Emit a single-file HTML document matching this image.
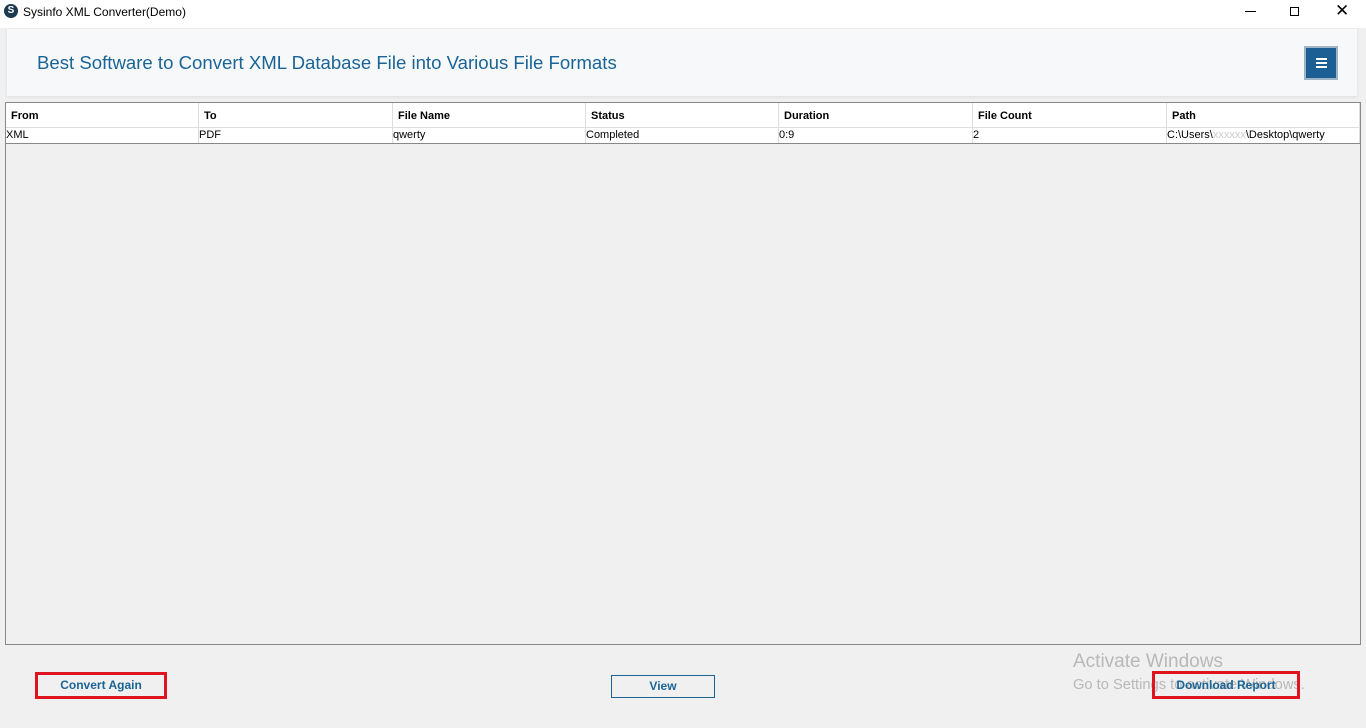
<!DOCTYPE html>
<html><head><style>
*{margin:0;padding:0;box-sizing:border-box}
body{width:1366px;height:728px;background:#f0f0f0;font-family:"Liberation Sans",sans-serif;position:relative;overflow:hidden}
.tb{position:absolute;left:0;top:0;width:1366px;height:28px;background:#fff}
.tb .t{position:absolute;left:23px;top:5px;font-size:12px;color:#000}
.ic{position:absolute;left:4px;top:4px;width:14px;height:14px;border-radius:50%;background:#1d3a4f;color:#fff;font-size:10px;font-weight:bold;text-align:center;line-height:14px}
.hdr{position:absolute;left:7px;top:29px;width:1350px;height:67px;background:#f7f8f9;box-shadow:0 1px 3px #ddd}
.hdr .h{position:absolute;left:30px;top:23px;font-size:18.6px;color:#1a6496}
.mb{position:absolute;left:1297px;top:17px;width:34px;height:34px;background:#1c5f94;border:2px solid #9db4c6}
.mb i{position:absolute;left:10px;width:11px;height:2px;background:#fff}
.tbl{position:absolute;left:5px;top:102px;width:1356px;height:543px;border:1px solid #888;background:#f0f0f0}
.row{position:absolute;left:0;width:1354px;background:#fff;display:flex}
.row div{border-right:1px solid #ddd;height:100%;font-size:11px;padding-left:2px}
.bt{position:absolute;font-size:12px;font-weight:bold;color:#1a6496;text-align:center}
</style></head><body>
<div class="tb"><div class="ic">S</div><div class="t">Sysinfo XML Converter(Demo)</div>
<div style="position:absolute;left:1245px;top:11px;width:11px;height:1px;background:#000"></div>
<div style="position:absolute;left:1290px;top:7px;width:9px;height:9px;border:1px solid #000"></div>
<div style="position:absolute;left:1335px;top:1px;font-size:17px">✕</div></div>
<div class="hdr"><div class="h">Best Software to Convert XML Database File into Various File Formats</div>
<div class="mb"><i style="top:10px"></i><i style="top:14px"></i><i style="top:18px"></i></div></div>
<div class="tbl">
<div class="row" style="top:0;height:25px;font-weight:bold;border-bottom:1px solid #ddd">
<div style="width:193px;padding:7px 5px;font-weight:bold">From</div><div style="width:194px;padding:7px 5px;font-weight:bold">To</div><div style="width:193px;padding:7px 5px;font-weight:bold">File Name</div><div style="width:193px;padding:7px 5px;font-weight:bold">Status</div><div style="width:194px;padding:7px 5px;font-weight:bold">Duration</div><div style="width:194px;padding:7px 5px;font-weight:bold">File Count</div><div style="width:193px;padding:7px 5px;font-weight:bold">Path</div></div>
<div class="row" style="top:25px;height:16px;border-bottom:1px solid #888">
<div style="width:193px;padding:1px 0">XML</div><div style="width:194px;padding:1px 0">PDF</div><div style="width:193px;padding:1px 0">qwerty</div><div style="width:193px;padding:1px 0">Completed</div><div style="width:194px;padding:1px 0">0:9</div><div style="width:194px;padding:1px 0">2</div><div style="width:193px;padding:1px 0">C:\Users\<span style="color:#ccc">xxxxxx</span>\Desktop\qwerty</div></div>
</div>
<div style="position:absolute;left:1073px;top:651px;font-size:19px;color:#b8b8b8">Activate Windows</div>
<div style="position:absolute;left:1073px;top:677px;font-size:14.7px;color:#b8b8b8">Go to Settings to activate Windows.</div>
<div class="bt" style="left:35px;top:672px;width:132px;height:27px;border:3px solid #e0141e;line-height:21px">Convert Again</div>
<div class="bt" style="left:611px;top:675px;width:104px;height:23px;border:1px solid #1a6496;line-height:21px">View</div>
<div class="bt" style="left:1152px;top:671px;width:148px;height:28px;border:3px solid #e0141e;line-height:22px">Download Report</div>
</body></html>
